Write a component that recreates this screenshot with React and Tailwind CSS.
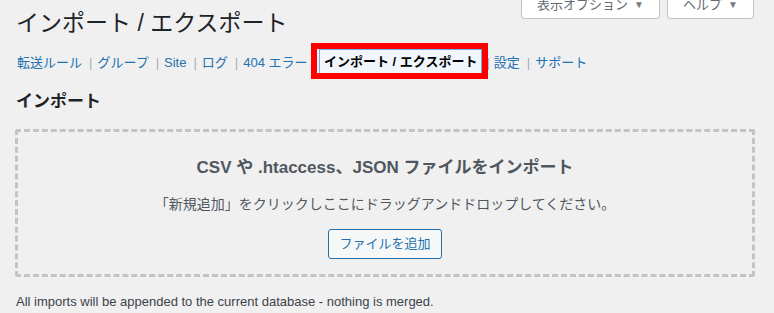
import { Fragment } from 'react'

const links = ['転送ルール', 'グループ', 'Site', 'ログ', '404 エラー']

export default function App() {
  return (
    <div className="min-h-screen bg-[#f0f0f1] px-4 font-['Liberation_Sans','Noto_Sans_CJK_JP',sans-serif] text-[13px] text-[#3c434a]">
      {/* Header */}
      <div className="flex items-start">
        <h1 className="mt-[8px] text-[23px] leading-[30px] font-normal text-[#1d2327]">インポート / エクスポート</h1>
        <div className="ml-auto mr-[4px] -mt-[9px] flex gap-[7px]">
          <button className="flex h-[28px] w-[139px] items-center justify-center gap-[6px] rounded-b-[4px] border border-t-0 border-[#c3c4c7] bg-white text-[13px] text-[#646970]">
            表示オプション <span className="text-[10px] text-[#787c82]">▼</span>
          </button>
          <button className="flex h-[28px] w-[87px] items-center justify-center gap-[6px] rounded-b-[4px] border border-t-0 border-[#c3c4c7] bg-white text-[13px] text-[#646970]">
            ヘルプ <span className="text-[10px] text-[#787c82]">▼</span>
          </button>
        </div>
      </div>

      {/* Sub navigation */}
      <nav className="mt-[12px] flex h-[26px] items-center pl-[1px]">
        {links.map((l, i) => (
          <Fragment key={l}>
            <a className="text-[#2271b1]">{l}</a>
            <span className={i === links.length - 1 ? 'ml-[7px] mr-[1px] text-[#a7aaad]' : 'ml-[7px] mr-[5px] text-[#a7aaad]'}>|</span>
          </Fragment>
        ))}
        <span className="relative">
          <a className="-mt-[2px] flex h-[26px] items-center border border-[#72aee6] bg-[#f0f6fc] px-[4px] font-bold text-black">
            インポート / エクスポート
          </a>
          <span className="pointer-events-none absolute -left-[8px] -right-[6px] -top-[8px] -bottom-[4px] border-[6px] border-[#ff0000]" />
        </span>
        <span className="mx-[4px] text-[#a7aaad]">|</span>
        <a className="text-[#2271b1]">設定</a>
        <span className="ml-[7px] mr-[5px] text-[#a7aaad]">|</span>
        <a className="text-[#2271b1]">サポート</a>
      </nav>

      {/* Import */}
      <h2 className="mt-[15px] text-[17px] leading-[22px] font-bold text-[#1d2327]">インポート</h2>

      <div className="mt-[16px] mr-[3px] -ml-[1px] rounded-[3px] border-[3px] border-dashed border-[#c3c4c7] pt-[24px] pb-[15px] text-center">
        <h3 className="text-[17px] leading-[24px] font-semibold text-[#50575e]">CSV や .htaccess、JSON ファイルをインポート</h3>
        <p className="mt-[14px] text-[14px] leading-[20px] text-[#50575e]">「新規追加」をクリックしここにドラッグアンドドロップしてください。</p>
        <button className="mt-[15px] h-[30px] rounded-[3px] border border-[#2271b1] bg-[#f6f7f7] px-[10px] text-[13px] text-[#2271b1]">
          ファイルを追加
        </button>
      </div>

      <p className="mt-[16px] leading-[18px] text-[#3c434a]">All imports will be appended to the current database - nothing is merged.</p>
    </div>
  )
}
